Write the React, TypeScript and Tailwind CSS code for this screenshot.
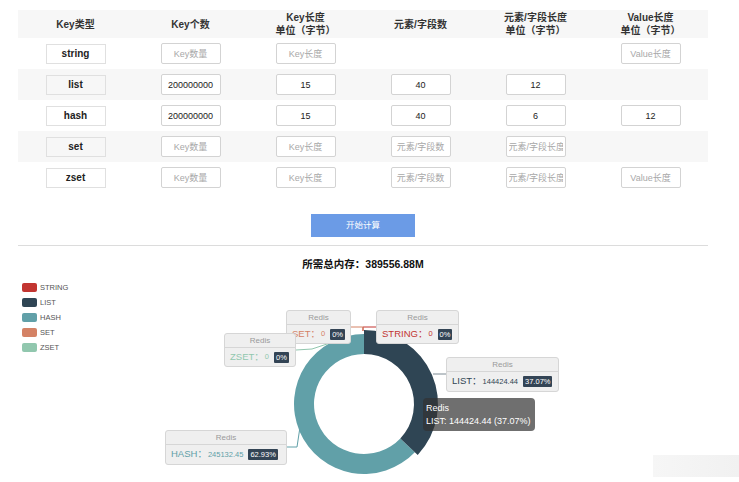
const COLS = [
  ["Key类型"],
  ["Key个数"],
  ["Key长度", "单位（字节）"],
  ["元素/字段数"],
  ["元素/字段长度", "单位（字节）"],
  ["Value长度", "单位（字节）"],
];

type Cell = { v?: string; ph?: string } | null;

const ROWS: { type: string; cells: Cell[] }[] = [
  {
    type: "string",
    cells: [{ ph: "Key数量" }, { ph: "Key长度" }, null, null, { ph: "Value长度" }],
  },
  {
    type: "list",
    cells: [{ v: "200000000" }, { v: "15" }, { v: "40" }, { v: "12" }, null],
  },
  {
    type: "hash",
    cells: [{ v: "200000000" }, { v: "15" }, { v: "40" }, { v: "6" }, { v: "12" }],
  },
  {
    type: "set",
    cells: [
      { ph: "Key数量" },
      { ph: "Key长度" },
      { ph: "元素/字段数" },
      { ph: "元素/字段长度" },
      null,
    ],
  },
  {
    type: "zset",
    cells: [
      { ph: "Key数量" },
      { ph: "Key长度" },
      { ph: "元素/字段数" },
      { ph: "元素/字段长度" },
      { ph: "Value长度" },
    ],
  },
];

const LEGEND = [
  { name: "STRING", color: "bg-[#c23531]" },
  { name: "LIST", color: "bg-[#2f4554]" },
  { name: "HASH", color: "bg-[#61a0a8]" },
  { name: "SET", color: "bg-[#d48265]" },
  { name: "ZSET", color: "bg-[#91c7ae]" },
];

function PieLabel({
  name,
  value,
  pct,
  color,
  className,
}: {
  name: string;
  value: string;
  pct: string;
  color: string;
  className: string;
}) {
  return (
    <div
      className={`absolute flex flex-col rounded-[3px] border border-[#d6d6d6] bg-[#efefef] ${className}`}
    >
      <div className="flex h-[14px] items-center justify-center border-b border-[#d6d6d6] text-[8px] text-[#9a9a9a]">
        Redis
      </div>
      <div className={`flex flex-1 items-center whitespace-nowrap pl-[5px] ${color}`}>
        <span className="text-[9.5px]">{name}：</span>
        <span className="ml-[1px] text-[7.5px]">{value}</span>
        <span className="ml-[5px] rounded-[1px] bg-[#334455] px-[2px] text-[7.5px] leading-[11px] text-white">
          {pct}
        </span>
      </div>
    </div>
  );
}

export default function App() {
  return (
    <div className="h-[482px] w-[739px] overflow-hidden bg-white pt-[10px] font-['Liberation_Sans','Noto_Sans_CJK_SC',sans-serif] text-[#333]">
      <div className="mx-[18px] w-[690px]">
        {/* Table */}
        <div className="grid h-[28px] grid-cols-6 bg-[#f7f7f7]">
          {COLS.map((lines) => (
            <div
              key={lines[0]}
              className="flex flex-col items-center justify-center text-[10px] font-bold leading-[13px]"
            >
              {lines.map((l) => (
                <span key={l}>{l}</span>
              ))}
            </div>
          ))}
        </div>

        {ROWS.map((row, i) => (
          <div
            key={row.type}
            className={`grid h-[31px] grid-cols-6 items-center ${i % 2 === 1 ? "bg-[#f7f7f7]" : ""}`}
          >
            <div className="flex justify-center">
              <div className="flex h-[20px] w-[60px] items-center justify-center border border-[#e0e0e0] text-[10px] font-bold text-[#222]">
                {row.type}
              </div>
            </div>
            {row.cells.map((c, j) => (
              <div key={j} className="flex justify-center">
                {c && (
                  <input
                    readOnly
                    value={c.v ?? ""}
                    placeholder={c.ph}
                    className="h-[21px] w-[60px] rounded-[2px] border border-[#d3d3d3] bg-white px-[2px] text-center text-[9px] text-[#222] outline-none placeholder:text-[#a8a8a8]"
                  />
                )}
              </div>
            ))}
          </div>
        ))}

        {/* Button */}
        <div className="mt-[21px] flex justify-center">
          <button
            type="button"
            className="h-[23px] w-[104px] bg-[#6b9be6] text-[8.5px] text-white"
          >
            开始计算
          </button>
        </div>

        <div className="mt-[8px] h-px bg-[#dcdcdc]" />

        <div className="mt-[11px] text-center text-[10.5px] font-bold leading-[14px] text-[#111]">
          所需总内存：389556.88M
        </div>
      </div>

      {/* Chart */}
      <div className="relative mt-[5px] h-[206px]">
        <div className="absolute left-[22px] top-[7px] flex flex-col gap-[6px]">
          {LEGEND.map((l) => (
            <div key={l.name} className="flex h-[9px] items-center gap-[3px]">
              <span className={`h-[9px] w-[15px] rounded-[2px] ${l.color}`} />
              <span className="text-[7.5px] text-[#555]">{l.name}</span>
            </div>
          ))}
        </div>

        <svg className="absolute left-0 top-0" width="739" height="206">
          <path
            d="M 414.83 176.13 A 70 70 0 1 1 364 58 L 364 78 A 50 50 0 1 0 400.31 162.38 Z"
            fill="#61a0a8"
          />
          <path
            d="M 364 54 A 74 74 0 0 1 417.74 178.88 L 400.31 162.38 A 50 50 0 0 0 364 78 Z"
            fill="#2f4554"
          />
          <path d="M 363 55 L 363 51 L 377 51" stroke="#c23531" fill="none" strokeWidth="1" />
          <path d="M 363 55 L 363 51 L 350 51" stroke="#d48265" fill="none" strokeWidth="1" />
          <path d="M 336 65 L 312 73 L 296 74" stroke="#91c7ae" fill="none" strokeWidth="1" />
          <path d="M 300 151 L 297 171 L 287 171" stroke="#61a0a8" fill="none" strokeWidth="1" />
          <path d="M 433 98 L 446 98" stroke="#7d8a93" fill="none" strokeWidth="1" />
        </svg>

        <PieLabel
          name="SET"
          value="0"
          pct="0%"
          color="text-[#d48265]"
          className="left-[286px] top-[34px] h-[34px] w-[65px]"
        />
        <PieLabel
          name="STRING"
          value="0"
          pct="0%"
          color="text-[#c23531]"
          className="left-[376px] top-[34px] h-[34px] w-[83px]"
        />
        <PieLabel
          name="ZSET"
          value="0"
          pct="0%"
          color="text-[#91c7ae]"
          className="left-[224px] top-[57px] h-[34px] w-[72px]"
        />
        <PieLabel
          name="LIST"
          value="144424.44"
          pct="37.07%"
          color="text-[#2f4554]"
          className="left-[446px] top-[81px] h-[35px] w-[113px]"
        />
        <PieLabel
          name="HASH"
          value="245132.45"
          pct="62.93%"
          color="text-[#61a0a8]"
          className="left-[165px] top-[154px] h-[35px] w-[122px]"
        />

        {/* Tooltip */}
        <div className="absolute left-[423px] top-[122px] flex h-[33px] w-[112px] flex-col justify-center rounded-[4px] bg-[rgba(50,50,50,0.7)] pl-[3px] text-[9px] leading-[13px] text-white">
          <span>Redis</span>
          <span className="whitespace-nowrap">LIST: 144424.44 (37.07%)</span>
        </div>

        <div className="absolute left-[653px] top-[179px] h-[22px] w-[86px] bg-gradient-to-r from-[#f6f6f6] to-[#f1f1f1]" />
      </div>
    </div>
  );
}
